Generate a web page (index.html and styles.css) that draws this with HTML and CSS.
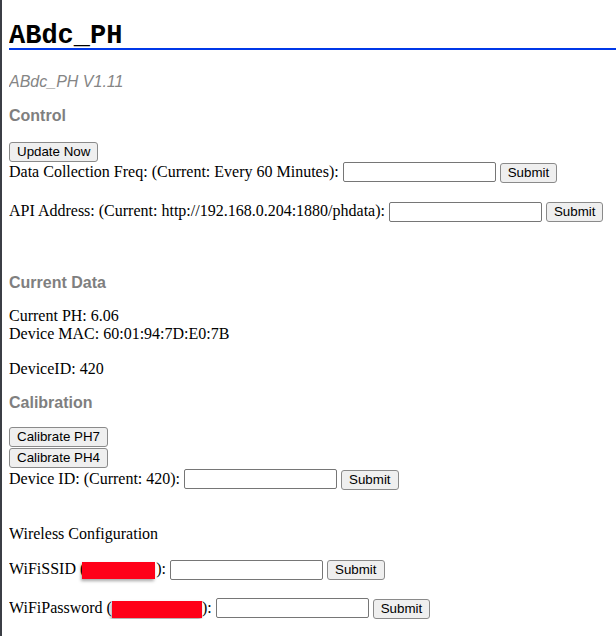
FILE: index.html
```html
<!DOCTYPE html>
<html>
<head>
<meta charset="utf-8">
<title>ABdc_PH</title>
<link rel="stylesheet" href="styles.css">
</head>
<body>
<h1 class="title">ABdc_PH</h1>
<p class="version">ABdc_PH V1.11</p>

<h4 class="section s-control">Control</h4>
<div class="btn-row r-update"><button class="btn">Update Now</button></div>
<form class="row r-freq"><span class="label">Data Collection Freq: (Current: Every 60 Minutes):</span><input class="field" type="text"><button class="btn" type="button">Submit</button></form>
<form class="row r-api"><span class="label">API Address: (Current: http://192.168.0.204:1880/phdata):</span><input class="field" type="text"><button class="btn" type="button">Submit</button></form>

<h4 class="section s-data">Current Data</h4>
<p class="text t-ph">Current PH: 6.06<br>Device MAC: 60:01:94:7D:E0:7B</p>
<p class="text t-id">DeviceID: 420</p>

<h4 class="section s-cal">Calibration</h4>
<div class="btn-row r-ph7"><button class="btn">Calibrate PH7</button></div>
<div class="btn-row r-ph4"><button class="btn">Calibrate PH4</button></div>
<form class="row r-devid"><span class="label">Device ID: (Current: 420):</span><input class="field" type="text"><button class="btn" type="button">Submit</button></form>

<p class="text t-wireless">Wireless Configuration</p>
<form class="row r-ssid"><span class="label">WiFiSSID (<span class="redact redact-ssid"></span>):</span><input class="field" type="text"><button class="btn" type="button">Submit</button></form>
<form class="row r-pw"><span class="label">WiFiPassword (<span class="redact redact-pw"></span>):</span><input class="field" type="text"><button class="btn" type="button">Submit</button></form>
</body>
</html>
```

FILE: styles.css
```css
html {
  border-left: 2px solid #3b3e45;
  min-height: 100%;
  box-sizing: border-box;
  background: #fff;
}
body {
  margin: 0 0 0 7px;
  padding: 24px 0 0 0;
  font-family: "Liberation Serif", "Times New Roman", serif;
  font-size: 16px;
  line-height: 18px;
  color: #000;
  overflow: hidden;
}
.title {
  margin: 0;
  font-family: "Liberation Mono", "Courier New", monospace;
  font-weight: bold;
  font-size: 27px;
  line-height: 24px;
  border-bottom: 2px solid #0038e8;
}
.version {
  margin: 23px 0 0 0;
  font-family: "Liberation Sans", Arial, sans-serif;
  font-style: italic;
  color: #858585;
}
.section {
  margin: 0;
  font-family: "Liberation Sans", Arial, sans-serif;
  font-size: 16px;
  font-weight: bold;
  color: #7f7f7f;
}
.s-control { margin-top: 16px; }
.s-data { margin-top: 52px; }
.s-cal { margin-top: 16px; }
.text { margin: 0; }
.t-ph { margin-top: 15px; }
.t-id { margin-top: 17px; }
.t-wireless { margin-top: 35px; }

.btn-row { display: flex; }
.r-update { margin-top: 17px; }
.r-ph7 { margin-top: 15px; }
.r-ph4 { margin-top: 1px; }

.row {
  display: flex;
  align-items: baseline;
  gap: 4px;
  margin: 0;
}
.r-freq { margin-top: 0; }
.r-api { margin-top: 19px; }
.r-devid { margin-top: 1px; }
.r-ssid { margin-top: 17px; }
.r-pw { margin-top: 18px; }

.label { white-space: nowrap; }

.btn {
  box-sizing: border-box;
  height: 20px;
  padding: 0 7px;
  margin: 0;
  font-family: "Liberation Sans", Arial, sans-serif;
  font-size: 13.33px;
  line-height: 16px;
  color: #000;
  background: #efefef;
  border: 1px solid #8a8a8a;
  border-radius: 3px;
}
.field {
  box-sizing: border-box;
  width: 153px;
  height: 20px;
  margin: 0;
  padding: 1px 2px;
  font-family: "Liberation Sans", Arial, sans-serif;
  font-size: 13.33px;
  border: 1px solid #767676;
  border-radius: 2px;
  background: #fff;
}
.redact {
  display: inline-block;
  height: 17px;
  vertical-align: -5px;
  background: #ff0018;
  box-shadow: -1px 2px 3px rgba(0, 0, 0, 0.35);
}
.redact-ssid { width: 73px; margin-left: -3px; margin-right: 1px; }
.redact-pw { width: 90px; }
```
